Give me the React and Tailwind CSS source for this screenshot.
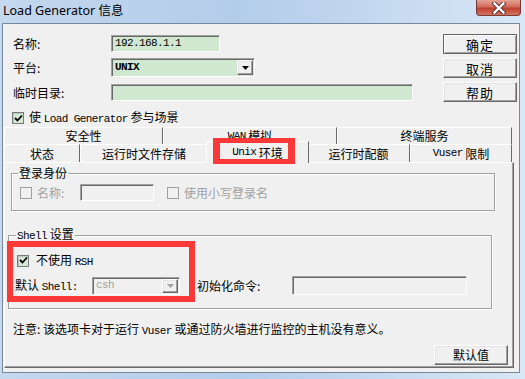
import React from "react";

const CJK = "font-['Noto_Sans_CJK_SC','Liberation_Sans',sans-serif]";
const MONO = "font-['Liberation_Mono','Noto_Sans_CJK_SC',monospace] text-[11px] tracking-[-0.6px]";

const sunken =
  "border border-t-[#a0a0a0] border-l-[#a0a0a0] border-r-white border-b-white shadow-[inset_1px_1px_0_#696969]";
const raised =
  "border border-t-white border-l-white border-r-[#696969] border-b-[#696969] shadow-[inset_-1px_-1px_0_#a0a0a0,inset_1px_1px_0_#e3e3e3]";

function Check({ checked, disabled }) {
  return (
    <div
      className={
        "w-[12px] h-[12px] border flex items-center justify-center shrink-0 " +
        (disabled
          ? "border-[#a0a0a0] bg-[#f0f0f0]"
          : "border-[#7b7b7b] bg-[#d5ead5] shadow-[inset_1px_1px_0_#b9c9b9]")
      }
    >
      {checked && (
        <svg width="9" height="9" viewBox="0 0 9 9">
          <path d="M1 4 L3.5 6.5 L8 1.5" stroke="#000" strokeWidth="1.8" fill="none" />
        </svg>
      )}
    </div>
  );
}

function DropBtn({ disabled }) {
  return (
    <div
      className={
        "w-[16px] h-full flex items-center justify-center bg-[#f0f0f0] " + raised
      }
    >
      <svg width="7" height="4" viewBox="0 0 7 4">
        <path d="M0 0 H7 L3.5 4 Z" fill={disabled ? "#a0a0a0" : "#000"} />
      </svg>
    </div>
  );
}

function Btn({ children, def }) {
  return (
    <div
      className={
        "w-[74px] h-[20px] flex items-center justify-center bg-[#f0f0f0] text-[13px] text-black " +
        (def
          ? "border border-[#646464] shadow-[inset_1px_1px_0_#fff,inset_-1px_-1px_0_#a0a0a0]"
          : raised)
      }
    >
      <span className="leading-none tracking-[1px]">{children}</span>
    </div>
  );
}

function BackTab({ w, children }) {
  return (
    <div
      className={
        "h-[17px] flex items-center justify-center border-t border-l border-white border-r border-r-[#696969] rounded-tl-[2px] text-[12px] leading-none " +
        w
      }
    >
      {children}
    </div>
  );
}

function FrontTab({ w, children }) {
  return (
    <div
      className={
        "h-[18px] flex items-center justify-center border-t border-l border-white border-r border-r-[#696969] rounded-tl-[2px] text-[12px] leading-none " +
        w
      }
    >
      {children}
    </div>
  );
}

export default function App() {
  return (
    <div
      className={
        "relative w-[525px] h-[379px] overflow-hidden flex flex-col bg-[linear-gradient(90deg,#c4d8ee_0%,#b3cce9_45%,#c6daf0_75%,#d9e7f6_100%)] text-black " +
        CJK
      }
    >
      {/* Title bar */}
      <div className="h-[23px] flex justify-between shrink-0">
        <div className="pl-[3px] pt-[3px] text-[12.5px] leading-[16px] text-black font-['Noto_Sans','Noto_Sans_CJK_SC',sans-serif]">
          Load Generator 信息
        </div>
        <div className="mr-[4px] w-[45px] h-[16px] rounded-b-[4px] border border-t-0 border-[#7a3a36] bg-[linear-gradient(180deg,#e5a497_0%,#d06b5b_45%,#c0412f_55%,#d3735f_100%)] flex items-center justify-center">
          <svg width="14" height="12" viewBox="0 0 14 12">
            <path d="M2.5 1.5 L11.5 10.5 M11.5 1.5 L2.5 10.5" stroke="#52302c" strokeWidth="4.2" strokeLinecap="square" />
            <path d="M2.5 1.5 L11.5 10.5 M11.5 1.5 L2.5 10.5" stroke="#ffffff" strokeWidth="2.4" strokeLinecap="square" />
          </svg>
        </div>
      </div>

      {/* Client area */}
      <div className="flex-1 ml-[2px] mr-[5px] mb-[6px] bg-[#f0f0f0] border border-[#76889c] flex flex-col">
        {/* Top area */}
        <div className="flex justify-between pt-[10px] pl-[10px] pr-[2px] shrink-0">
          <div className="flex flex-col pt-[1px] text-[12px]">
            <div className="flex items-center h-[17px]">
              <div className="w-[98px] leading-none">名称:</div>
              <div className={"w-[109px] h-[17px] bg-[#cfe8cf] flex items-center pl-[3px] " + MONO + " " + sunken}>
                192.168.1.1
              </div>
            </div>
            <div className="flex items-center h-[19px] mt-[6px]">
              <div className="w-[98px] leading-none">平台:</div>
              <div className={"w-[144px] h-[19px] bg-[#cfe8cf] flex items-center justify-between pr-[1px] py-[1px] " + sunken}>
                <span className={"pl-[3px] font-bold " + MONO}>UNIX</span>
                <DropBtn />
              </div>
            </div>
            <div className="flex items-center h-[17px] mt-[7px]">
              <div className="w-[98px] leading-none">临时目录:</div>
              <div className={"w-[302px] h-[17px] bg-[#cfe8cf] " + sunken}></div>
            </div>
            <div className="flex items-center h-[12px] mt-[11px] -ml-[1px]">
              <Check checked />
              <span className="ml-[5px] leading-none">
                使 <span className={MONO}>Load Generator</span> 参与场景
              </span>
            </div>
          </div>
          <div className="flex flex-col gap-[4px]">
            <Btn def>确定</Btn>
            <Btn>取消</Btn>
            <Btn>帮助</Btn>
          </div>
        </div>

        {/* Tab control */}
        <div className="ml-[1px] w-[510px] mt-[3px] flex-1 flex flex-col mb-[4px]">
          <div className="flex w-[508px]">
            <BackTab w="w-[159px]">安全性</BackTab>
            <BackTab w="w-[174px]">
              <span className={MONO}>WAN</span>&nbsp;模拟
            </BackTab>
            <BackTab w="w-[175px]">终端服务</BackTab>
          </div>
          <div className="flex w-[508px] items-end h-[18px]">
            <FrontTab w="w-[76px]">状态</FrontTab>
            <FrontTab w="w-[128px]">运行时文件存储</FrontTab>
            <div className="relative z-10 -mx-[2px] w-[103px] h-[22px] -mb-[1px] bg-[#f0f0f0] border-t border-l border-white border-r border-r-[#696969] rounded-tl-[2px] flex items-center justify-center text-[12px] leading-none">
              <span className={MONO}>Unix</span>&nbsp;环境
            </div>
            <FrontTab w="w-[103px]">运行时配额</FrontTab>
            <FrontTab w="w-[102px]">
              <span className={MONO}>Vuser</span>&nbsp;限制
            </FrontTab>
          </div>
          <div className="flex-1 flex flex-col border border-t-white border-l-white border-r-[#696969] border-b-[#696969] shadow-[inset_-1px_-1px_0_#a0a0a0] text-[12px]">
            {/* Group 1 */}
            <fieldset className="ml-[6px] mt-[3px] w-[484px] border border-[#a0a0a0] shadow-[inset_1px_1px_0_#fff,1px_1px_0_#fff] pb-[9px]">
              <legend className="ml-[6px] px-[1px] leading-[14px] text-black">登录身份</legend>
              <div className="flex items-center h-[17px] mt-[4px] ml-[8px] text-[#a0a0a0]">
                <Check disabled />
                <div className="ml-[5px] w-[43px] leading-none">名称:</div>
                <div className={"w-[74px] h-[17px] bg-[#f0f0f0] " + sunken}></div>
                <div className="ml-[13px]">
                  <Check disabled />
                </div>
                <div className="ml-[5px] leading-none">使用小写登录名</div>
              </div>
            </fieldset>

            {/* Group 2 */}
            <fieldset className="ml-[3px] mt-[16px] w-[484px] border border-[#a0a0a0] shadow-[inset_1px_1px_0_#fff,1px_1px_0_#fff] pb-[13px]">
              <legend className="ml-[7px] px-[1px] leading-[14px]">
                <span className={MONO}>Shell</span> 设置
              </legend>
              <div className="flex items-center h-[13px] mt-[11px] ml-[8px]">
                <Check checked />
                <span className="ml-[7px] leading-none">
                  不使用 <span className={MONO}>RSH</span>
                </span>
              </div>
              <div className="flex items-center h-[19px] mt-[9px] ml-[6px]">
                <div className="w-[77px] leading-none">
                  默认 <span className={MONO}>Shell:</span>
                </div>
                <div className={"w-[88px] h-[18px] bg-[#f0f0f0] flex items-center justify-between pr-[1px] py-[1px] " + sunken}>
                  <span className={"pl-[3px] text-[#a0a0a0] " + MONO}>csh</span>
                  <DropBtn disabled />
                </div>
                <div className="ml-[17px] w-[95px] leading-none">初始化命令:</div>
                <div className={"w-[175px] h-[19px] bg-[#f0f0f0] " + sunken}></div>
              </div>
            </fieldset>

            <div className="ml-[8px] mt-[13px] leading-[14px]">
              注意: 该选项卡对于运行 <span className={MONO}>Vuser</span> 或通过防火墙进行监控的主机没有意义。
            </div>
            <div className="self-end mr-[5px] mt-[7px]">
              <div className={"w-[74px] h-[20px] flex items-center justify-center bg-[#f0f0f0] text-[12px] " + raised}>
                默认值
              </div>
            </div>
          </div>
        </div>
      </div>

      {/* Annotation overlays */}
      <div className="absolute z-20 left-[213px] top-[138px] w-[82px] h-[26px] border-solid border-[#fb3939] border-x-[7px] border-y-[5px] pointer-events-none"></div>
      <div className="absolute z-20 left-[7px] top-[241px] w-[188px] h-[61px] border-solid border-[6px] border-[#fb3939] pointer-events-none"></div>
    </div>
  );
}
